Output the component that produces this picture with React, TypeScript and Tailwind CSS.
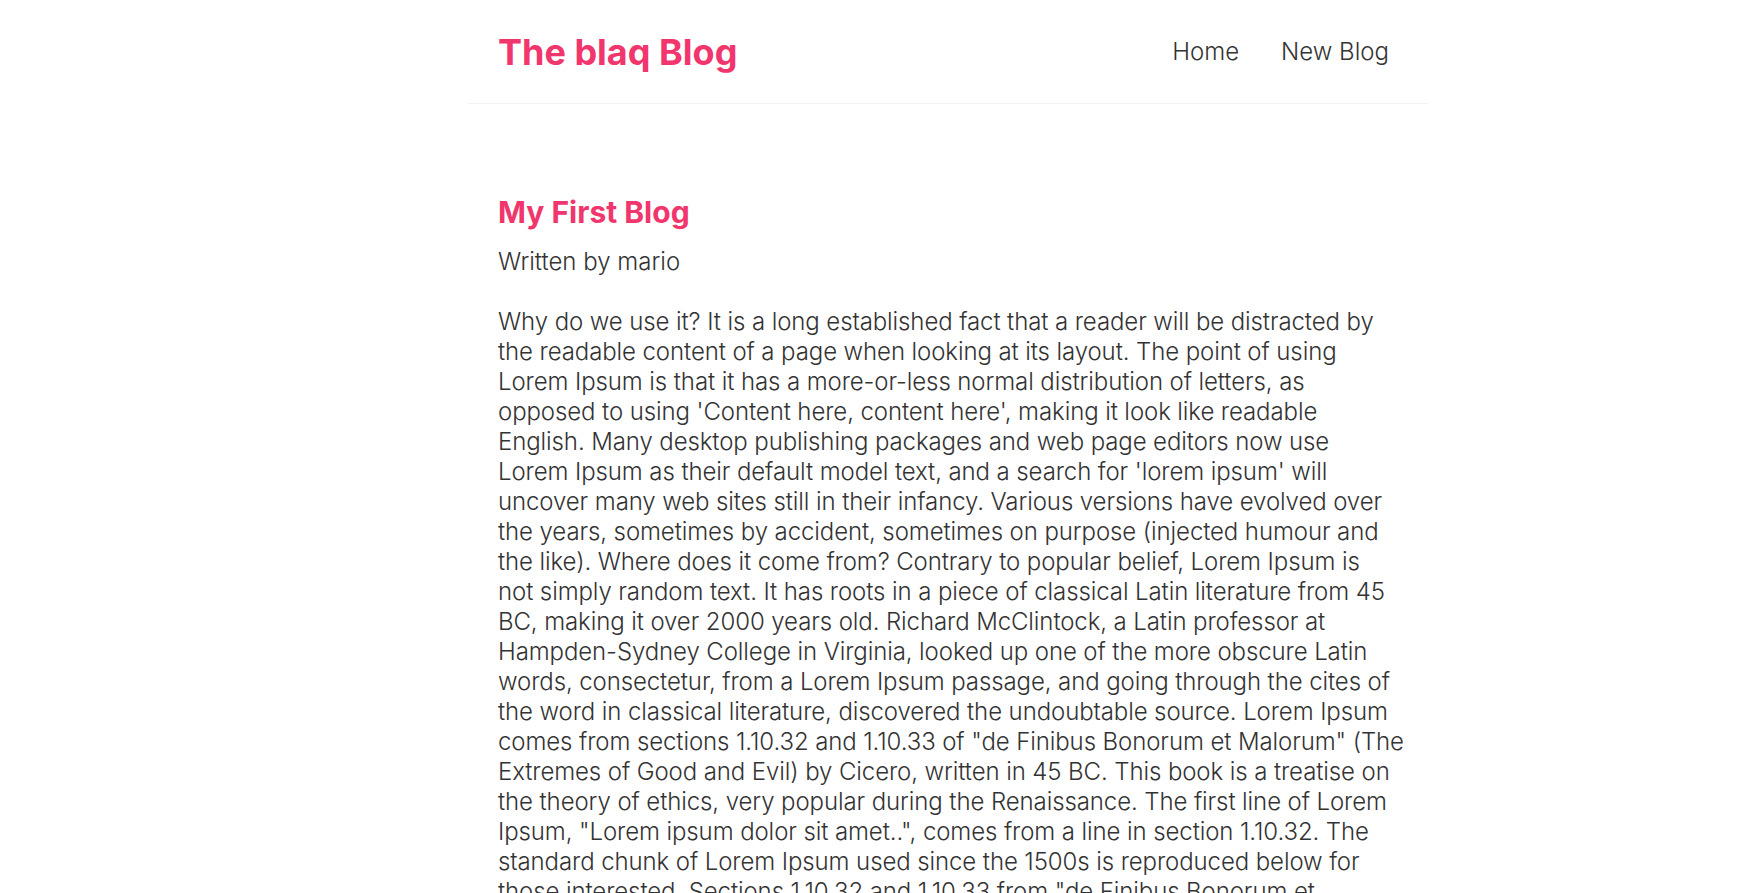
const blog = {
  title: "My First Blog",
  author: "mario",
  // body lines as they break in the original layout
  lines: [
    "Why do we use it? It is a long established fact that a reader will be distracted by",
    "the readable content of a page when looking at its layout. The point of using",
    "Lorem Ipsum is that it has a more-or-less normal distribution of letters, as",
    "opposed to using 'Content here, content here', making it look like readable",
    "English. Many desktop publishing packages and web page editors now use",
    "Lorem Ipsum as their default model text, and a search for 'lorem ipsum' will",
    "uncover many web sites still in their infancy. Various versions have evolved over",
    "the years, sometimes by accident, sometimes on purpose (injected humour and",
    "the like). Where does it come from? Contrary to popular belief, Lorem Ipsum is",
    "not simply random text. It has roots in a piece of classical Latin literature from 45",
    "BC, making it over 2000 years old. Richard McClintock, a Latin professor at",
    "Hampden-Sydney College in Virginia, looked up one of the more obscure Latin",
    "words, consectetur, from a Lorem Ipsum passage, and going through the cites of",
    "the word in classical literature, discovered the undoubtable source. Lorem Ipsum",
    'comes from sections 1.10.32 and 1.10.33 of "de Finibus Bonorum et Malorum" (The',
    "Extremes of Good and Evil) by Cicero, written in 45 BC. This book is a treatise on",
    "the theory of ethics, very popular during the Renaissance. The first line of Lorem",
    'Ipsum, "Lorem ipsum dolor sit amet..", comes from a line in section 1.10.32. The',
    "standard chunk of Lorem Ipsum used since the 1500s is reproduced below for",
    'those interested. Sections 1.10.32 and 1.10.33 from "de Finibus Bonorum et',
    'Malorum" by Cicero are also reproduced in their exact original form, accompanied',
    "by English versions from the 1914 translation by H. Rackham.",
  ],
};

function Navbar() {
  return (
    <nav className="w-[960px] mx-auto flex items-center p-[30px] h-[104px] border-b border-[#f2f2f2]">
      <h1 className="text-[36px] leading-[42px] font-bold text-[#f1356d]">The blaq Blog</h1>
      <div className="ml-auto flex">
        <a href="/" className="ml-[24px] px-[9px] text-[24px] font-light text-[#333] no-underline">
          Home
        </a>
        <a href="/create" className="ml-[24px] px-[9px] text-[24px] font-light text-[#333] no-underline">
          New Blog
        </a>
      </div>
    </nav>
  );
}

export default function App() {
  return (
    <div className="min-h-screen bg-white pl-[151px] font-['Inter',sans-serif] text-[#333]">
      <Navbar />
      <div className="w-[960px] mx-auto mt-[60px] p-[30px]">
        <article>
          <h2 className="text-[30px] leading-[37.5px] font-bold text-[#f1356d] mb-[15px]">{blog.title}</h2>
          <p className="text-[24px] leading-[30px] font-light">Written by {blog.author}</p>
          <div className="my-[30px] text-[24px] leading-[30px] font-light tracking-[-0.1px] whitespace-nowrap">
            {blog.lines.map((l, i) => (
              <span key={i}>
                {l}
                {i < blog.lines.length - 1 && <br />}
              </span>
            ))}
          </div>
        </article>
      </div>
    </div>
  );
}
